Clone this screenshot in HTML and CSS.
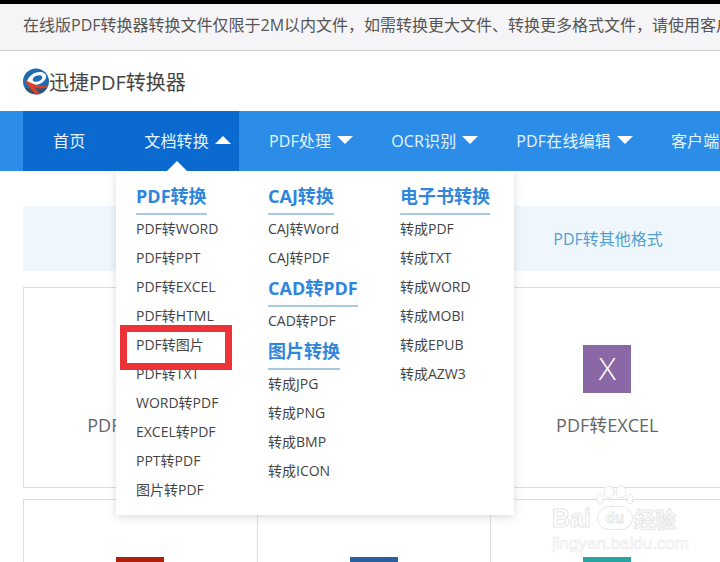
FILE: index.html
```html
<!DOCTYPE html>
<html lang="zh-CN">
<head>
    <meta charset="UTF-8">
    <meta name="viewport" content="width=device-width, initial-scale=1.0">
    <title>迅捷PDF转换器</title>
    <link rel="stylesheet" href="styles.css">
</head>
<body>
    <div class="notice">在线版PDF转换器转换文件仅限于2M以内文件，如需转换更大文件、转换更多格式文件，请使用客户端</div>

    <div class="logo">
        <svg class="logo-icon" width="26" height="27" viewBox="0 0 26 27">
            <circle cx="13" cy="13.5" r="13" fill="#1d6db4"/>
            <path d="M2 20a13 13 0 0 0 22 0z" fill="#33566f"/>
            <path d="M4 13C7 6 14 3 20 4.500C24 6 24 10 21 13C17 17 11 18 7 16z" fill="#fff"/>
            <ellipse cx="14.500" cy="10.500" rx="5" ry="3" fill="#1d6db4" transform="rotate(-20 14.500 10.500)"/>
            <path d="M1 11C4 17 8 22 13 26.500C14 26.500 16 26.500 17 26C15 24 13 22 12 19.500C16 21 20 21 25 18C19 18.500 9 17 1 11z" fill="#d9402e"/>
        </svg>
        <span>迅捷PDF转换器</span>
    </div>

    <nav class="nav">
        <div class="nav-active">
            <a class="nav-item home">首页</a>
            <a class="nav-item">文档转换<i class="arrow up"></i></a>
        </div>
        <a class="nav-item">PDF处理<i class="arrow"></i></a>
        <a class="nav-item">OCR识别<i class="arrow"></i></a>
        <a class="nav-item">PDF在线编辑<i class="arrow"></i></a>
        <a class="nav-item">客户端</a>
    </nav>

    <main class="content">
        <div class="tabs">
            <span class="tab">PDF转其他格式</span>
        </div>
        <div class="cards">
            <div class="card"><div class="card-icon blue">W</div><p>PDF转WORD</p></div>
            <div class="card"><div class="card-icon orange">P</div><p>PDF转PPT</p></div>
            <div class="card"><div class="card-icon purple">X</div><p>PDF转EXCEL</p></div>
            <div class="card"><div class="card-icon red">H</div><p>PDF转HTML</p></div>
            <div class="card"><div class="card-icon navy">图</div><p>PDF转图片</p></div>
            <div class="card"><div class="card-icon teal">T</div><p>PDF转TXT</p></div>
        </div>
    </main>

    <div class="menu">
        <div class="menu-col">
            <h3><span>PDF转换</span></h3>
            <a>PDF转WORD</a>
            <a>PDF转PPT</a>
            <a>PDF转EXCEL</a>
            <a>PDF转HTML</a>
            <a>PDF转图片</a>
            <a>PDF转TXT</a>
            <a>WORD转PDF</a>
            <a>EXCEL转PDF</a>
            <a>PPT转PDF</a>
            <a>图片转PDF</a>
        </div>
        <div class="menu-col">
            <h3><span>CAJ转换</span></h3>
            <a>CAJ转Word</a>
            <a>CAJ转PDF</a>
            <h3><span>CAD转PDF</span></h3>
            <a>CAD转PDF</a>
            <h3><span>图片转换</span></h3>
            <a>转成JPG</a>
            <a>转成PNG</a>
            <a>转成BMP</a>
            <a>转成ICON</a>
        </div>
        <div class="menu-col">
            <h3><span>电子书转换</span></h3>
            <a>转成PDF</a>
            <a>转成TXT</a>
            <a>转成WORD</a>
            <a>转成MOBI</a>
            <a>转成EPUB</a>
            <a>转成AZW3</a>
        </div>
    </div>

    <div class="highlight"></div>

    <div class="watermark">
        <svg class="paw" width="38" height="20" viewBox="0 0 38 20">
            <g fill="#fff" stroke="#e6e6e6">
                <ellipse cx="4" cy="14" rx="3" ry="5"/>
                <ellipse cx="13" cy="7" rx="5" ry="6"/>
                <ellipse cx="25" cy="7" rx="5" ry="6"/>
                <ellipse cx="34" cy="14" rx="3" ry="5"/>
            </g>
        </svg>
        <div class="wm-brand">Bai<span class="wm-du">du</span><span class="wm-cn">经验</span></div>
        <div class="wm-url">jingyan.baidu.com</div>
    </div>
</body>
</html>
```

FILE: styles.css
```css
* {
    box-sizing: border-box;
}

html, body {
    height: 562px;
}

body {
    margin: 0;
    border-top: 4px solid #000;
    background: #fff;
    color: #444;
    font-family: "Open Sans", "Noto Sans CJK SC", sans-serif;
    overflow: hidden;
    position: relative;
}

.notice {
    height: 47px;
    padding-left: 23px;
    line-height: 43px;
    font-size: 16px;
    color: #555;
    background: #f5f4f6;
    border-bottom: 1px solid #d0d0d0;
    white-space: nowrap;
    overflow: hidden;
}

.logo {
    height: 60px;
    padding-left: 23px;
    display: flex;
    align-items: center;
    font-size: 20px;
    color: #444;
}

.logo-icon {
    flex: none;
}

.nav {
    height: 60px;
    padding-left: 23px;
    display: flex;
    background: #2b8de8;
    color: #e8f3fd;
    font-size: 16px;
    letter-spacing: 0.15px;
    white-space: nowrap;
    overflow: hidden;
}

.nav-active {
    display: flex;
    background: #0a6ad0;
}

.nav-item {
    flex: none;
    display: flex;
    align-items: center;
    padding-left: 30px;
    padding-bottom: 2px;
}

.nav-item.home {
    padding-right: 29px;
}

.arrow {
    width: 0;
    height: 0;
    margin: 0 8px 0 6px;
    border-left: 8px solid transparent;
    border-right: 8px solid transparent;
    border-top: 8px solid #fff;
}

.arrow.up {
    border-top: 0;
    border-bottom: 8px solid #fff;
}

.content {
    padding: 35px 0 0 23px;
}

.tabs {
    width: 720px;
    height: 65px;
    padding-left: 468px;
    display: flex;
    background: #eff7fd;
}

.tab {
    width: 234px;
    line-height: 66px;
    text-align: center;
    font-size: 16px;
    color: #52a0cf;
}

.cards {
    width: 760px;
    margin-top: 16px;
    display: grid;
    grid-template-columns: repeat(3, 233.5px);
    grid-auto-rows: 201px;
    row-gap: 11px;
}

.card {
    margin-right: -1px;
    padding-top: 57px;
    border: 1px solid #ddd;
    text-align: center;
}

.card p {
    margin: 18px 0 0;
    font-size: 18px;
    line-height: 28px;
    color: #666;
}

.card-icon {
    width: 48px;
    height: 48px;
    margin: 0 auto;
    line-height: 46px;
    font-weight: 300;
    font-size: 32px;
    color: #fff;
}

.blue { background: #2a5f9e; }
.orange { background: #c9532a; }
.purple { background: #8a67a5; }
.red { background: #b0200c; }
.navy { background: #2a5f9e; }
.teal { background: #2aa3a3; }

.menu {
    position: absolute;
    left: 116px;
    top: 167px;
    width: 398px;
    height: 344px;
    padding: 10px 0 0 20px;
    display: flex;
    background: #fff;
    box-shadow: 0 2px 8px rgba(120, 110, 130, 0.25);
    font-size: 14px;
}

.menu:before {
    content: "";
    position: absolute;
    left: 51px;
    top: -10px;
    border-left: 10px solid transparent;
    border-right: 10px solid transparent;
    border-bottom: 10px solid #fff;
}

.menu-col {
    flex: none;
    width: 132px;
}

.menu-col h3 {
    margin: 0;
    height: 34px;
    font-size: 18px;
    font-weight: 700;
    line-height: 31px;
    color: #2f86dc;
}

.menu-col h3 span {
    display: inline-block;
    height: 34px;
    border-bottom: 2px solid #a9c9e0;
}

.menu-col a {
    display: block;
    height: 29px;
    line-height: 27px;
    color: #444;
    white-space: nowrap;
}

.highlight {
    position: absolute;
    left: 120px;
    top: 321px;
    width: 112px;
    height: 45px;
    border: 7px solid #ee3338;
}

.watermark {
    position: absolute;
    left: 552px;
    top: 481px;
    width: 128px;
    text-align: center;
    color: #fff;
    -webkit-text-stroke: 1px #e6e6e6;
    white-space: nowrap;
}

.paw {
    display: block;
    margin: 0 auto 0 44px;
}

.wm-brand {
    display: flex;
    align-items: center;
    height: 26px;
    font-family: "Liberation Sans", sans-serif;
    font-weight: 700;
    font-size: 25px;
}

.wm-du {
    width: 36px;
    height: 24px;
    margin: 0 1px 0 6px;
    border: 1px solid #e6e6e6;
    border-radius: 12px;
    font-size: 15px;
    line-height: 22px;
}

.wm-cn {
    font-family: "Noto Sans CJK SC", sans-serif;
    font-size: 21px;
}

.wm-url {
    margin-top: 3px;
    font-family: "Liberation Sans", sans-serif;
    font-size: 17px;
    line-height: 20px;
    -webkit-text-stroke: 0.5px #e6e6e6;
}
```
